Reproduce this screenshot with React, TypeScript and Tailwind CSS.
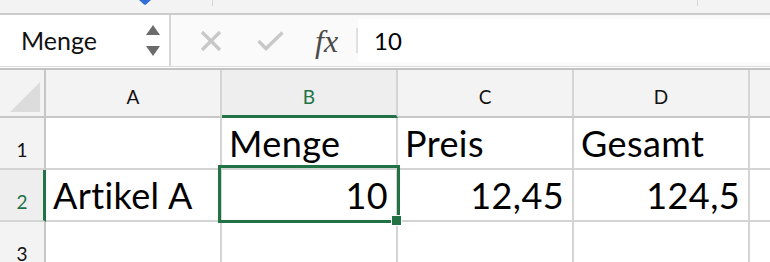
import React from 'react';

const GREEN = '#217346';
const CELL_FONT = { fontFamily: 'Lato, "Open Sans", sans-serif' };

type Cell = { text?: string; align?: 'left' | 'right'; selected?: boolean };

const rows: { n: number; cells: Cell[] }[] = [
  { n: 1, cells: [{}, { text: 'Menge' }, { text: 'Preis' }, { text: 'Gesamt' }] },
  {
    n: 2,
    cells: [
      { text: 'Artikel A' },
      { text: '10', align: 'right', selected: true },
      { text: '12,45', align: 'right' },
      { text: '124,5', align: 'right' },
    ],
  },
  { n: 3, cells: [{}, {}, {}, {}] },
];

const cols = ['A', 'B', 'C', 'D'];

function TopStrip() {
  return (
    <div className="flex h-[15px] items-start border-b-2 border-[#cbcbcb] bg-[#f3f3f3]">
      <div className="w-[139px]" />
      <svg width="12" height="5" viewBox="0 0 12 5">
        <path d="M0 0 L12 0 L7 4.5 Q6 5.2 5 4.5 Z" fill="#2f6fd6" />
      </svg>
      <div className="w-[61px]" />
      <div className="h-[6px] w-px bg-[#d8d8d8]" />
      <div className="w-[484px]" />
      <div className="h-[6px] w-px bg-[#d8d8d8]" />
    </div>
  );
}

function FormulaBar() {
  return (
    <div className="flex h-[51px] bg-[#fafafa]" style={CELL_FONT}>
      <div className="flex w-[169px] items-center justify-between bg-white pl-[21px] pr-[9px]">
        <span className="text-[25px] leading-none text-[#111]">Menge</span>
        <div className="flex flex-col gap-[11px]">
          <svg width="14" height="10" viewBox="0 0 14 10">
            <path d="M7 0 L14 10 L0 10 Z" fill="#6b6b6b" />
          </svg>
          <svg width="14" height="10" viewBox="0 0 14 10">
            <path d="M0 0 L14 0 L7 10 Z" fill="#6b6b6b" />
          </svg>
        </div>
      </div>
      <div className="w-[2px] bg-[#d6d6d6]" />
      <div className="flex flex-1 items-center">
        <div className="w-[29px]" />
        <svg width="22" height="22" viewBox="0 0 22 22">
          <path d="M2 2 L20 20 M20 2 L2 20" stroke="#c8c8c8" strokeWidth="3.2" />
        </svg>
        <div className="w-[35px]" />
        <svg width="27" height="20" viewBox="0 0 27 20">
          <path d="M1.5 10 L9 17.5 L25.5 1.5" stroke="#c8c8c8" strokeWidth="3.4" fill="none" />
        </svg>
        <div className="w-[31px]" />
        <span
          className="text-[32px] italic leading-none text-[#4a4a4a]"
          style={{ fontFamily: '"Liberation Serif", serif' }}
        >
          fx
        </span>
        <div className="w-[18px]" />
        <div className="h-[25px] w-[2px] bg-[#e0e0e0]" />
        <div className="flex h-[43px] flex-1 items-center bg-white pl-[16px]">
          <span className="text-[24px] leading-none text-black">10</span>
        </div>
      </div>
    </div>
  );
}

function ColumnHeaders() {
  return (
    <div className="flex h-[48px] bg-[#f3f3f3]" style={CELL_FONT}>
      <div className="relative w-[46px] shrink-0 border-r-2 border-b-2 border-[#c6c6c6]">
        <svg className="absolute left-0 top-0" width="44" height="46" viewBox="0 0 44 46">
          <path d="M40 12 L40 42 L10 42 Z" fill="#dcdcdc" />
        </svg>
      </div>
      {cols.map((c) => {
        const sel = c === 'B';
        return (
          <div
            key={c}
            className={
              sel
                ? 'flex w-[176px] shrink-0 items-end justify-center border-r-2 border-b-[3px] border-r-[#d4d4d4] border-b-[#217346] bg-[#eeeeee] pb-[7px]'
                : 'flex w-[176px] shrink-0 items-end justify-center border-r-2 border-b-2 border-r-[#d4d4d4] border-b-[#c6c6c6] pb-2'
            }
          >
            <span
              className={sel ? 'text-[19px] leading-[23px] text-[#217346]' : 'text-[19px] leading-[23px] text-[#111]'}
            >
              {c}
            </span>
          </div>
        );
      })}
      <div className="flex-1 border-b-2 border-[#c6c6c6]" />
    </div>
  );
}

function Row({ n, cells }: { n: number; cells: Cell[] }) {
  const sel = n === 2;
  return (
    <div className="flex h-[52px]" style={CELL_FONT}>
      <div
        className={
          sel
            ? 'flex w-[46px] shrink-0 items-end justify-center border-r-[3px] border-b-2 border-r-[#217346] border-b-[#d4d4d4] bg-[#eeeeee] pb-[7px] pl-px'
            : 'flex w-[46px] shrink-0 items-end justify-center border-r-2 border-b-2 border-r-[#c6c6c6] border-b-[#d4d4d4] bg-[#f3f3f3] pb-[7px]'
        }
      >
        <span className={sel ? 'text-[19px] leading-[23px] text-[#217346]' : 'text-[19px] leading-[23px] text-[#111]'}>
          {n}
        </span>
      </div>
      {cells.map((cell, i) => (
        <div
          key={i}
          className={
            cell.align === 'right'
              ? 'relative flex w-[176px] shrink-0 items-end justify-end border-r-2 border-b-2 border-[#d4d4d4] bg-white pb-[3px] pr-[8px]'
              : 'relative flex w-[176px] shrink-0 items-end justify-start border-r-2 border-b-2 border-[#d4d4d4] bg-white pb-[3px] pl-[7px]'
          }
        >
          {cell.text && (
            <span className="text-[36px] leading-[43px] tracking-[0.4px] text-black">{cell.text}</span>
          )}
          {cell.selected && (
            <>
              <div
                className="pointer-events-none absolute left-[-4px] top-[-5px] z-10 h-[58px] w-[182px] border-[3px]"
                style={{ borderColor: GREEN }}
              />
              <div className="absolute left-[169px] top-[45px] z-20 h-[11px] w-[11px] border border-white bg-[#217346]" />
            </>
          )}
        </div>
      ))}
      <div className="flex-1 border-b-2 border-[#d4d4d4] bg-white" />
    </div>
  );
}

export default function App() {
  return (
    <div className="h-[262px] w-[770px] overflow-hidden bg-white">
      <TopStrip />
      <FormulaBar />
      <div className="h-px bg-[#dcdcdc]" />
      <div className="h-px bg-white" />
      <div className="h-[2px] bg-[#c2c2c2]" />
      <ColumnHeaders />
      {rows.map((r) => (
        <Row key={r.n} n={r.n} cells={r.cells} />
      ))}
    </div>
  );
}
